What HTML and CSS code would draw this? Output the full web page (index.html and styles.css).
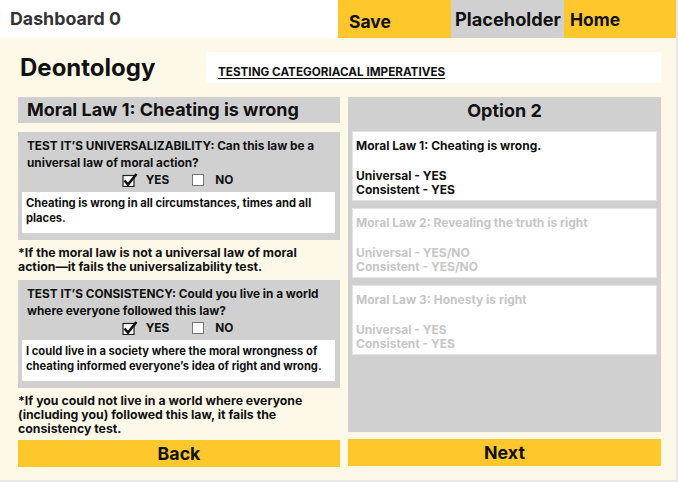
FILE: index.html
```html
<!DOCTYPE html>
<html lang="en">
<head>
<meta charset="utf-8">
<title>Deontology</title>
<link rel="stylesheet" href="styles.css">
</head>
<body>
<div class="app">
  <header class="topbar">
    <div class="brand">Dashboard 0</div>
    <div class="tab tab-yellow tab-save">Save</div>
    <div class="tab tab-gray tab-ph">Placeholder</div>
    <div class="tab tab-yellow tab-home">Home</div>
  </header>
  <main class="main">
    <div class="title-row">
      <h1 class="page-title">Deontology</h1>
      <div class="subtitle-box"><span class="subtitle">TESTING CATEGORIACAL IMPERATIVES </span></div>
    </div>
    <div class="columns">
      <section class="left">
        <div class="law-head">Moral Law 1: Cheating is wrong</div>
        <div class="test-box">
          <p class="question">TEST IT’S UNIVERSALIZABILITY: Can this law be a universal law of moral action?</p>
          <div class="choices">
            <span class="choice"><svg class="cb" viewBox="0 0 16 14" width="16" height="14"><rect x="1" y="2.5" width="11" height="11" fill="#fff" stroke="#222" stroke-width="1.2"/><path d="M2.5 7.5 L6 11.5 L14.5 1" fill="none" stroke="#111" stroke-width="2.6"/></svg>YES</span>
            <span class="choice"><svg class="cb" viewBox="0 0 16 14" width="16" height="14"><rect x="1.5" y="1.5" width="11" height="11" fill="#fff" stroke="#777" stroke-width="1"/></svg>NO</span>
          </div>
          <div class="answer">Cheating is wrong in all circumstances, times and all places.</div>
        </div>
        <p class="note">*If the moral law is not a universal law of moral<br>action—it fails the universalizability test.</p>
        <div class="test-box">
          <p class="question">TEST IT’S CONSISTENCY: Could you live in a world where everyone followed this law?</p>
          <div class="choices">
            <span class="choice"><svg class="cb" viewBox="0 0 16 14" width="16" height="14"><rect x="1" y="2.5" width="11" height="11" fill="#fff" stroke="#222" stroke-width="1.2"/><path d="M2.5 7.5 L6 11.5 L14.5 1" fill="none" stroke="#111" stroke-width="2.6"/></svg>YES</span>
            <span class="choice"><svg class="cb" viewBox="0 0 16 14" width="16" height="14"><rect x="1.5" y="1.5" width="11" height="11" fill="#fff" stroke="#777" stroke-width="1"/></svg>NO</span>
          </div>
          <div class="answer">I could live in a society where the moral wrongness of cheating informed everyone’s idea of right and wrong.</div>
        </div>
        <p class="note note-last">*If you could not live in a world where everyone<br>(including you) followed this law, it fails the<br>consistency test.</p>
        <button class="btn">Back</button>
      </section>
      <section class="right">
        <div class="panel">
          <h2 class="panel-title">Option 2</h2>
          <div class="card">
            <p>Moral Law 1: Cheating is wrong.</p>
            <p>Universal - YES<br>Consistent - YES</p>
          </div>
          <div class="card card-muted">
            <p>Moral Law 2: Revealing the truth is right</p>
            <p>Universal - YES/NO<br>Consistent - YES/NO</p>
          </div>
          <div class="card card-muted">
            <p>Moral Law 3: Honesty is right</p>
            <p>Universal - YES<br>Consistent - YES</p>
          </div>
        </div>
        <button class="btn">Next</button>
      </section>
    </div>
  </main>
</div>
</body>
</html>
```

FILE: styles.css
```css
* { box-sizing: border-box; }
html, body { margin: 0; padding: 0; }
body {
  background: #e8e8e8;
  font-family: "Inter", "Liberation Sans", sans-serif;
  font-weight: 700;
  color: #111;
}
.app {
  width: 676px;
  height: 480px;
  display: flex;
  flex-direction: column;
  background: #fef8e9;
}
.topbar {
  display: flex;
  height: 38px;
  flex: none;
}
.brand {
  width: 338px;
  background: #fff;
  color: #333;
  font-size: 17.8px;
  padding: 8px 0 0 10px;
}
.tab {
  width: 113px;
  font-size: 17.5px;
  padding: 8px 0 0 4px;
}
.tab-yellow { background: #fec72c; }
.tab-gray { background: #d0d0d0; }
.tab-save { padding: 11px 0 0 11px; }
.tab-ph { font-size: 18.2px; }
.tab-home { flex: 1; padding: 9px 0 0 6px; }
.main {
  flex: 1;
  padding: 14px 15px 0 18px;
  display: flex;
  flex-direction: column;
}
.title-row {
  display: flex;
  align-items: center;
  height: 31px;
  margin-bottom: 14px;
}
.page-title {
  margin: 0;
  width: 188px;
  font-size: 24px;
  font-weight: 700;
  padding-left: 2px;
}
.subtitle-box {
  flex: 1;
  height: 31px;
  background: #fff;
  padding: 8px 0 0 12px;
}
.subtitle {
  font-size: 11.7px;
  text-decoration: underline;
  text-underline-offset: 2px;
}
.columns {
  display: grid;
  grid-template-columns: 322px 313px;
  column-gap: 8px;
}
.left { display: flex; flex-direction: column; }
.law-head {
  background: #d0d0d0;
  height: 26px;
  font-size: 18px;
  padding: 2px 0 0 9px;
  margin-bottom: 9px;
}
.test-box {
  background: #d0d0d0;
  height: 108px;
  padding: 6px 5px 0 4px;
}
.question {
  margin: 0;
  font-size: 11.8px;
  line-height: 17px;
  padding-left: 5px;
}
.choices {
  display: flex;
  justify-content: center;
  gap: 22px;
  height: 16px;
  align-items: center;
  margin: 0 0 4px;
  font-size: 11.8px;
  padding-right: 2px;
}
.choice { display: flex; align-items: center; gap: 8px; }
.cb { display: block; }
.answer {
  background: #fff;
  height: 41px;
  font-size: 11.2px;
  line-height: 15px;
  padding: 4px 4px 0 4px;
}
.note {
  margin: 0;
  font-size: 12.3px;
  line-height: 14px;
  padding: 6px 0 6px;
}
.note-last { padding: 6px 0 4px; }
.btn {
  display: block;
  width: 100%;
  height: 27px;
  border: 0;
  background: #fec72c;
  font-family: inherit;
  font-weight: 700;
  font-size: 17.8px;
  color: #111;
  padding: 0;
}
.right { display: flex; flex-direction: column; }
.panel {
  background: #d0d0d0;
  height: 335px;
  padding: 0 4px;
  margin-bottom: 7px;
}
.panel-title {
  margin: 0;
  height: 34px;
  text-align: center;
  font-size: 18px;
  font-weight: 700;
  padding-top: 3px;
}
.card {
  background: #fff;
  border: 1px solid #e4e4e4;
  height: 70px;
  padding: 7px 3px 0;
  margin-bottom: 7px;
  font-size: 12px;
  line-height: 13.5px;
}
.card p { margin: 0 0 16.5px; }
.card-muted { color: #c6c6c6; }
```
